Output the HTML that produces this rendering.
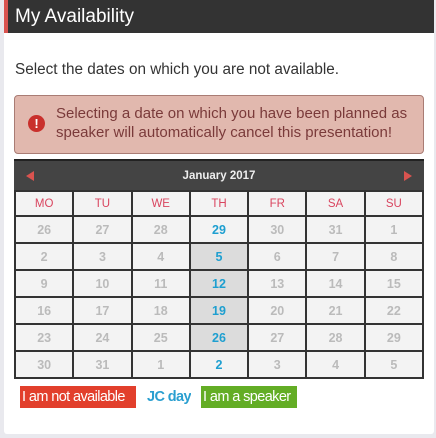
<!DOCTYPE html>
<html><head><meta charset="utf-8"><style>
*{box-sizing:border-box;margin:0;padding:0}
body{width:436px;height:438px;background:#e9e9ee;font-family:"Liberation Sans",sans-serif;position:relative;overflow:hidden}
.panel{position:absolute;left:4px;top:0;width:430px;height:434px;background:#fff;border-radius:0 0 3px 3px}
.hdr{position:absolute;left:0;top:0;width:430px;height:33px;background:#333;border-left:4px solid #d9534f;color:#fff;font-size:19px;line-height:33px;padding-left:7px}
.sel{position:absolute;left:11px;top:61px;font-size:15.3px;color:#333;white-space:nowrap}
.alert{position:absolute;left:10px;top:95px;width:410px;height:59px;background:#e1b8ae;border:1px solid #a97c74;border-radius:4px;color:#7a3a3a;font-size:15px;line-height:19px;padding:8px 0 0 41px;white-space:nowrap}
.ic{position:absolute;left:13px;top:19px;width:17px;height:17px;border-radius:50%;background:#c9302c;color:#fff;font-weight:bold;font-size:13px;line-height:17px;text-align:center}
.cal{position:absolute;left:10px;top:159px;width:410px}
.ch{height:31px;background:#444;border-top:2px solid #222;color:#eee;font-weight:bold;font-size:11.5px;text-align:center;line-height:30px;position:relative}
.al{position:absolute;top:10px;width:0;height:0;border-top:5px solid transparent;border-bottom:5px solid transparent}
table{border-collapse:collapse;width:410px;table-layout:fixed}
td{border:2px solid #333;background:#f3f3f3;text-align:center;font-size:12.5px;font-weight:bold;color:#bbb;height:27px}
tr.d td{height:25px;color:#d9455f;font-weight:normal;font-size:11.5px}
td.j{color:#1e9fd0}
td.g{background:#dcdcdc}
.leg{position:absolute;top:386px;font-size:14.5px;letter-spacing:-0.6px;line-height:22px;height:22px;white-space:nowrap;overflow:hidden}
</style></head><body>
<div class="panel">
<div class="hdr">My Availability</div>
<div class="sel">Select the dates on which you are not available.</div>
<div class="alert"><div class="ic">!</div>Selecting a date on which you have been planned as<br>speaker will automatically cancel this presentation!</div>
<div class="cal">
<div class="ch">January 2017<span class="al" style="left:12px;border-right:8px solid #d9534f"></span><span class="al" style="right:12px;border-left:8px solid #d9534f"></span></div>
<table>
<tr class="d"><td>MO</td><td>TU</td><td>WE</td><td>TH</td><td>FR</td><td>SA</td><td>SU</td></tr>
<tr><td>26</td><td>27</td><td>28</td><td class="j">29</td><td>30</td><td>31</td><td>1</td></tr>
<tr><td>2</td><td>3</td><td>4</td><td class="j g">5</td><td>6</td><td>7</td><td>8</td></tr>
<tr><td>9</td><td>10</td><td>11</td><td class="j g">12</td><td>13</td><td>14</td><td>15</td></tr>
<tr><td>16</td><td>17</td><td>18</td><td class="j g">19</td><td>20</td><td>21</td><td>22</td></tr>
<tr><td>23</td><td>24</td><td>25</td><td class="j g">26</td><td>27</td><td>28</td><td>29</td></tr>
<tr><td>30</td><td>31</td><td>1</td><td class="j">2</td><td>3</td><td>4</td><td>5</td></tr>
</table></div>
<div class="leg" style="left:16px;width:116px;background:#e23f2c;color:#fff;padding-left:2px">I am not available</div>
<div class="leg" style="left:143px;color:#2a9fd0;font-weight:bold;font-size:14.5px">JC day</div>
<div class="leg" style="left:197px;width:96px;background:#63ad25;color:#fff;padding-left:2px">I am a speaker</div>
</div>
</body></html>
